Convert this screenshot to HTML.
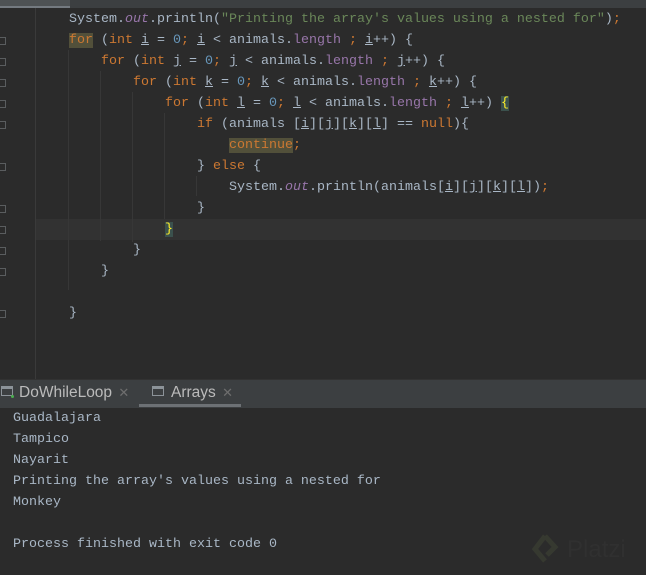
<!DOCTYPE html>
<html><head><meta charset="utf-8"><style>
*{margin:0;padding:0}
body{width:646px;height:575px;background:#2b2b2b;position:relative;overflow:hidden;font-family:"Liberation Mono",monospace;font-size:13.33px;color:#a9b7c6}
.l{position:absolute;left:69px;white-space:pre;line-height:21px;height:21px}
.k{color:#cc7832}.s{color:#6a8759}.n{color:#6897bb}.f{color:#9876aa}.i{font-style:italic;color:#9876aa}
u{text-decoration:underline}
.g{position:absolute;left:0;width:6px;height:8px;border:1px solid #5a5d5f;border-left:none;box-sizing:border-box}
.v{position:absolute;width:1px;background:#373737}
.o{position:absolute;left:13px;white-space:pre;line-height:21px}
</style></head><body>
<div style="position:absolute;left:0;top:0;width:646px;height:8px;background:#3c3f41"></div>
<div style="position:absolute;left:0;top:0;width:70px;height:6px;background:#4e5254"></div>
<div style="position:absolute;left:0;top:6px;width:70px;height:2px;background:#747a80"></div>
<div style="position:absolute;left:35px;top:8px;width:1px;height:371px;background:#3a3a3a"></div>
<div style="position:absolute;left:36px;top:219px;width:610px;height:21px;background:#323232"></div>
<div class="v" style="left:68px;top:50px;height:240px"></div>
<div class="v" style="left:100px;top:71px;height:170px"></div>
<div class="v" style="left:132px;top:92px;height:150px"></div>
<div class="v" style="left:164px;top:113px;height:106px"></div>
<div class="v" style="left:196px;top:176px;height:20px"></div>
<div class="g" style="top:37px"></div><div class="g" style="top:58px"></div><div class="g" style="top:79px"></div><div class="g" style="top:100px"></div><div class="g" style="top:121px"></div><div class="g" style="top:163px"></div><div class="g" style="top:205px"></div><div class="g" style="top:226px"></div><div class="g" style="top:247px"></div><div class="g" style="top:268px"></div><div class="g" style="top:310px"></div>
<div class="l" style="top:9px">System.<span class="i">out</span>.println(<span class="s">"Printing the array's values using a nested for"</span>)<span class="k">;</span></div>
<div class="l" style="top:30px"><span class="k" style="background:#52503a">for</span> (<span class="k">int</span> <u>i</u> = <span class="n">0</span><span class="k">;</span> <u>i</u> &lt; animals.<span class="f">length</span> <span class="k">;</span> <u>i</u>++) {</div>
<div class="l" style="top:51px;left:101px"><span class="k">for</span> (<span class="k">int</span> <u>j</u> = <span class="n">0</span><span class="k">;</span> <u>j</u> &lt; animals.<span class="f">length</span> <span class="k">;</span> <u>j</u>++) {</div>
<div class="l" style="top:72px;left:133px"><span class="k">for</span> (<span class="k">int</span> <u>k</u> = <span class="n">0</span><span class="k">;</span> <u>k</u> &lt; animals.<span class="f">length</span> <span class="k">;</span> <u>k</u>++) {</div>
<div class="l" style="top:93px;left:165px"><span class="k">for</span> (<span class="k">int</span> <u>l</u> = <span class="n">0</span><span class="k">;</span> <u>l</u> &lt; animals.<span class="f">length</span> <span class="k">;</span> <u>l</u>++) <span style="background:#3b514d;color:#ffef28">{</span></div>
<div class="l" style="top:114px;left:197px"><span class="k">if</span> (animals [<u>i</u>][<u>j</u>][<u>k</u>][<u>l</u>] == <span class="k">null</span>){</div>
<div class="l" style="top:135px;left:229px"><span class="k" style="background:#52503a">continue</span><span class="k">;</span></div>
<div class="l" style="top:156px;left:197px">} <span class="k">else</span> {</div>
<div class="l" style="top:177px;left:229px">System.<span class="i">out</span>.println(animals[<u>i</u>][<u>j</u>][<u>k</u>][<u>l</u>])<span class="k">;</span></div>
<div class="l" style="top:198px;left:197px">}</div>
<div class="l" style="top:219px;left:165px"><span style="background:#3b514d;color:#ffef28">}</span></div>
<div class="l" style="top:240px;left:133px">}</div>
<div class="l" style="top:261px;left:101px">}</div>
<div class="l" style="top:303px;left:69px">}</div>
<div style="position:absolute;left:0;top:379px;width:646px;height:28px;background:#3c3f41;border-top:1px solid #323232"></div>
<div style="position:absolute;left:1px;top:386px;width:12px;height:10px;border:1px solid #8c9399;border-top-width:3px;box-sizing:border-box"></div>
<div style="position:absolute;left:11px;top:395px;width:3px;height:3px;background:#4caf50;border-radius:2px"></div>
<div style="position:absolute;left:19px;top:384px;font-family:'Liberation Sans',sans-serif;font-size:15.5px;color:#bbbbbb">DoWhileLoop <span style="color:#6e6e6e;font-size:13px;margin-left:2px">✕</span></div>
<div style="position:absolute;left:152px;top:386px;width:12px;height:10px;border:1px solid #8c9399;border-top-width:3px;box-sizing:border-box"></div>
<div style="position:absolute;left:171px;top:384px;font-family:'Liberation Sans',sans-serif;font-size:15.5px;color:#bbbbbb">Arrays <span style="color:#6e6e6e;font-size:13px;margin-left:2px">✕</span></div>
<div style="position:absolute;left:139px;top:404px;width:102px;height:3px;background:#6d7175"></div>
<div class="o" style="top:408px">Guadalajara</div>
<div class="o" style="top:429px">Tampico</div>
<div class="o" style="top:450px">Nayarit</div>
<div class="o" style="top:471px">Printing the array's values using a nested for</div>
<div class="o" style="top:492px">Monkey</div>
<div class="o" style="top:534px">Process finished with exit code 0</div>
<svg style="position:absolute;left:531px;top:532px" width="30" height="38" viewBox="0 0 30 38"><path d="M14 4 L4 17 L14 29 M14 4 L24 15 L16 23" fill="none" stroke="#363930" stroke-width="5"/></svg>
<div style="position:absolute;left:567px;top:536px;font-family:'Liberation Sans',sans-serif;font-size:24px;color:#303030">Platzi</div>
</body></html>
